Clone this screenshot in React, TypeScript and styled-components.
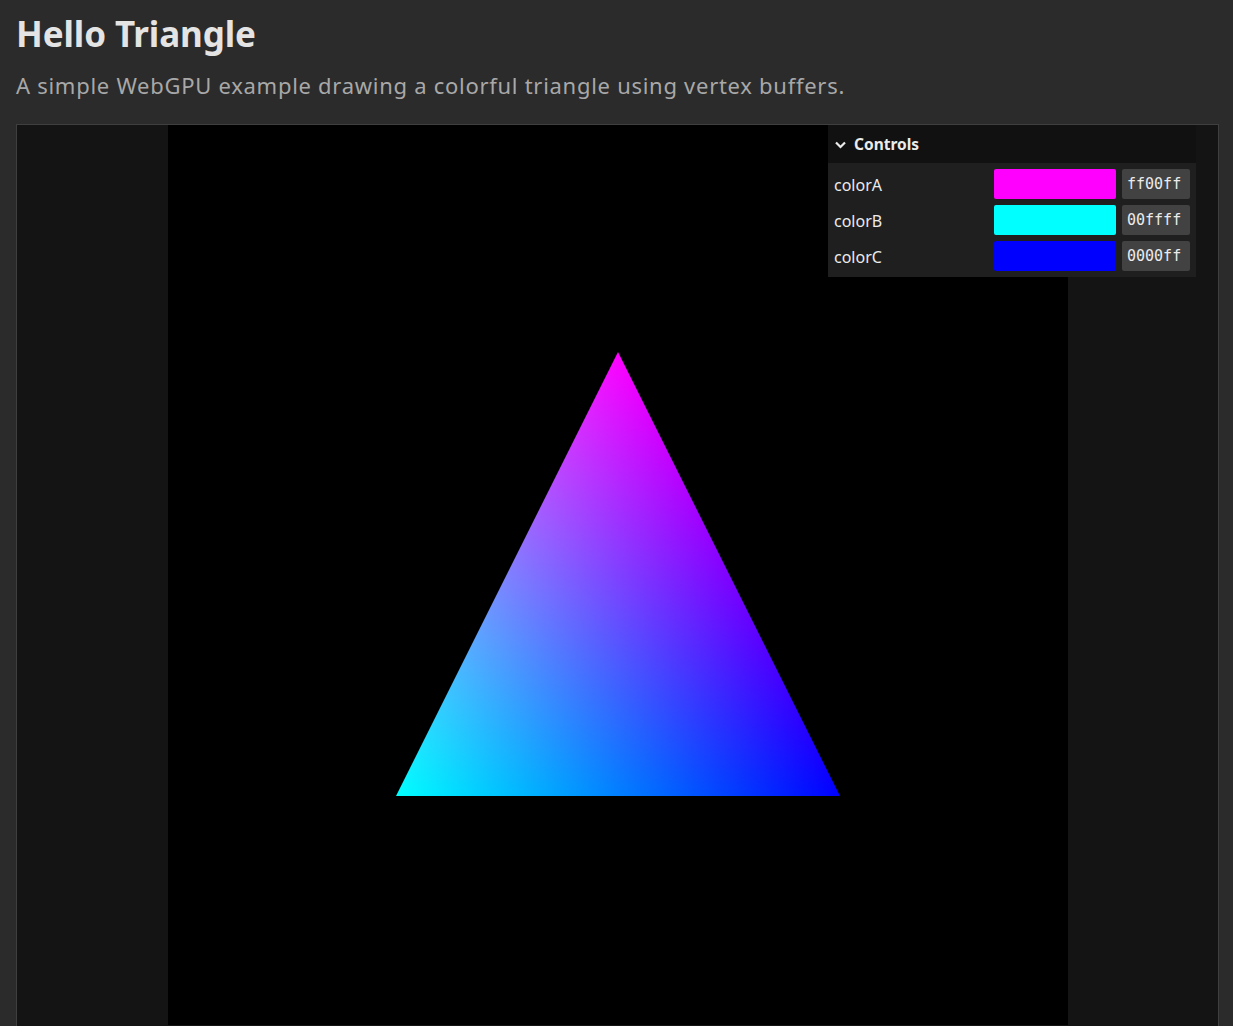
import React from "react";
import styled, { createGlobalStyle } from "styled-components";

const Global = createGlobalStyle`
  html, body { margin: 0; padding: 0; background: #2b2b2b; }
  body { font-family: "Noto Sans", "Open Sans", sans-serif; color: #e0e0e0; overflow: hidden; }
`;

const Page = styled.div`
  padding: 0 16px;
  height: 1026px;
  overflow: hidden;
`;

const Title = styled.h1`
  margin: 0;
  padding-top: 12px;
  font-size: 35px;
  line-height: 44px;
  font-weight: 700;
  color: #e4e4e4;
  letter-spacing: -0.1px;
`;

const Subtitle = styled.p`
  margin: 14px 0 0 0;
  font-size: 22px;
  line-height: 30px;
  letter-spacing: 0.72px;
  color: #a8a8a8;
`;

const Frame = styled.div`
  position: relative;
  margin-top: 24px;
  width: 1201px;
  height: 920px;
  border: 1px solid #3f3f3f;
  background: #141414;
  display: flex;
  justify-content: center;
  align-items: flex-start;
`;

const Canvas = styled.div`
  width: 900px;
  height: 900px;
  background: #000;
  flex: none;
`;

const Gui = styled.div`
  position: absolute;
  top: 0;
  right: 22px;
  width: 368px;
  font-family: "Noto Sans", "Open Sans", sans-serif;
  color: #ebebeb;
`;

const GuiTitle = styled.div`
  height: 38px;
  background: #111111;
  display: flex;
  align-items: center;
  gap: 7px;
  padding-left: 6px;
  font-size: 15.5px;
  font-weight: 700;
`;

const GuiBody = styled.div`
  background: #1f1f1f;
  padding: 6px 6px;
  display: flex;
  flex-direction: column;
  gap: 6px;
`;

const Row = styled.div`
  display: flex;
  align-items: center;
  height: 30px;
`;

const Label = styled.div`
  flex: 1;
  font-size: 16px;
  padding-top: 2px;
`;

const Swatch = styled.div<{ $c: string }>`
  width: 122px;
  height: 30px;
  border-radius: 2px;
  background: ${(p) => p.$c};
`;

const Hex = styled.div`
  margin-left: 6px;
  width: 68px;
  height: 30px;
  box-sizing: border-box;
  padding-left: 5px;
  border-radius: 2px;
  background: #424242;
  font-family: "DejaVu Sans Mono", "Liberation Mono", monospace;
  font-size: 15px;
  line-height: 30px;
  color: #ebebeb;
`;

const Triangle = () => (
  <svg width="900" height="900" viewBox="0 0 900 900" style={{ display: "block", isolation: "isolate" }}>
    <defs>
      <linearGradient id="gA" gradientUnits="userSpaceOnUse" x1="450" y1="227" x2="450" y2="671">
        <stop offset="0" stopColor="#ff0000" />
        <stop offset="1" stopColor="#000000" />
      </linearGradient>
      <linearGradient id="gB" gradientUnits="userSpaceOnUse" x1="228" y1="671" x2="585" y2="494">
        <stop offset="0" stopColor="#00ff00" />
        <stop offset="1" stopColor="#000000" />
      </linearGradient>
    </defs>
    <polygon points="450,227 228,671 672,671" fill="#0000ff" />
    <polygon points="450,227 228,671 672,671" fill="url(#gA)" style={{ mixBlendMode: "screen" }} />
    <polygon points="450,227 228,671 672,671" fill="url(#gB)" style={{ mixBlendMode: "screen" }} />
  </svg>
);

const Chevron = () => (
  <svg width="13" height="13" viewBox="0 0 13 13">
    <path d="M2 4.5 L6.5 9 L11 4.5" fill="none" stroke="#ebebeb" strokeWidth="2.2" />
  </svg>
);

const colors = [
  { name: "colorA", c: "#ff00ff", hex: "ff00ff" },
  { name: "colorB", c: "#00ffff", hex: "00ffff" },
  { name: "colorC", c: "#0000ff", hex: "0000ff" },
];

export default function App() {
  return (
    <Page>
      <Global />
      <Title>Hello Triangle</Title>
      <Subtitle>A simple WebGPU example drawing a colorful triangle using vertex buffers.</Subtitle>
      <Frame>
        <Canvas>
          <Triangle />
        </Canvas>
        <Gui>
          <GuiTitle>
            <Chevron />
            Controls
          </GuiTitle>
          <GuiBody>
            {colors.map((r) => (
              <Row key={r.name}>
                <Label>{r.name}</Label>
                <Swatch $c={r.c} />
                <Hex>{r.hex}</Hex>
              </Row>
            ))}
          </GuiBody>
        </Gui>
      </Frame>
    </Page>
  );
}
